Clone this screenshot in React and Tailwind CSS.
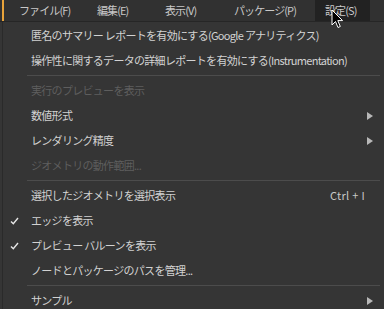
import React from "react";

const menus = [
  { label: "ファイル(F)", cls: "w-[78px] pl-[15px]" },
  { label: "編集(E)", cls: "w-[68px] pl-[15px]" },
  { label: "表示(V)", cls: "w-[69px] pl-[15px]" },
  { label: "パッケージ(P)", cls: "w-[96px] pl-[15px]" },
  { label: "設定(S)", cls: "w-[55px] pl-[10px] bg-[#222222]" },
];

const items = [
  { label: "匿名のサマリー レポートを有効にする(Google アナリティクス)" },
  { label: "操作性に関するデータの詳細レポートを有効にする(Instrumentation)" },
  { sep: true },
  { label: "実行のプレビューを表示", disabled: true },
  { label: "数値形式", sub: true },
  { label: "レンダリング精度", sub: true },
  { label: "ジオメトリの動作範囲...", disabled: true },
  { sep: true },
  { label: "選択したジオメトリを選択表示", shortcut: "Ctrl + I" },
  { label: "エッジを表示", checked: true },
  { label: "プレビュー バルーンを表示", checked: true },
  { label: "ノードとパッケージのパスを管理..." },
  { sep: true },
  { label: "サンプル", sub: true },
];

const Check = () => (
  <svg width="9" height="8" viewBox="0 0 9 8" className="block">
    <path d="M1 4.5 L3.3 6.8 L8 1" fill="none" stroke="#e6e6e6" strokeWidth="1.4" />
  </svg>
);

const Arrow = () => (
  <svg width="6" height="8" viewBox="0 0 6 8" className="block">
    <path d="M0 0 L6 4 L0 8 Z" fill="#b8b8b8" />
  </svg>
);

const Cursor = () => (
  <svg width="14" height="21" viewBox="0 0 14 21" className="absolute left-[331px] top-[9px]">
    <path d="M1 1 L1 16 L4.5 12.5 L7 18.5 L9.3 17.5 L6.8 11.6 L11.6 11.6 Z" fill="#000" stroke="#fff" strokeWidth="1" />
  </svg>
);

export default function App() {
  return (
    <div
      className="relative w-[384px] h-[309px] overflow-hidden bg-[#353535] text-[11px] text-[#d4d4d4]"
      style={{ fontFamily: '"Noto Sans CJK JP", "Noto Sans", sans-serif' }}
    >
      <div className="flex h-[22px] items-center bg-[#313131] border-b border-[#262626]">
        <div className="w-[2px] h-full bg-[#e8a33a] ml-[2px]" />
        <div className="flex h-full">
          {menus.map((m) => (
            <div key={m.label} className={"flex items-center h-full shrink-0 " + m.cls}>
              <span className="whitespace-nowrap tracking-[-0.9px] text-[#c8c8c8]">{m.label}</span>
            </div>
          ))}
        </div>
      </div>
      <div className="ml-[2px] border-l border-[#2a2a2a] pt-[1px]">
        {items.map((it, i) =>
          it.sep ? (
            <div key={i} className="h-[5px] flex items-center pl-[24px] pr-[4px]">
              <div className="h-px w-full bg-[#4c4c4c]" />
            </div>
          ) : (
            <div key={i} className="flex items-center h-[25px] pr-[11px]">
              <div className="w-[28px] flex pl-[7px]">{it.checked && <Check />}</div>
              <span
                className={
                  "flex-1 whitespace-nowrap tracking-[-0.7px] " +
                  (it.disabled ? "text-[#5e5e5e]" : "text-[#d2d2d2]")
                }
              >
                {it.label}
              </span>
              {it.shortcut && <span className="text-[#c8c8c8] mr-[8px] tracking-[0.3px] whitespace-nowrap">{it.shortcut}</span>}
              {it.sub && <Arrow />}
            </div>
          )
        )}
      </div>
      <Cursor />
    </div>
  );
}
